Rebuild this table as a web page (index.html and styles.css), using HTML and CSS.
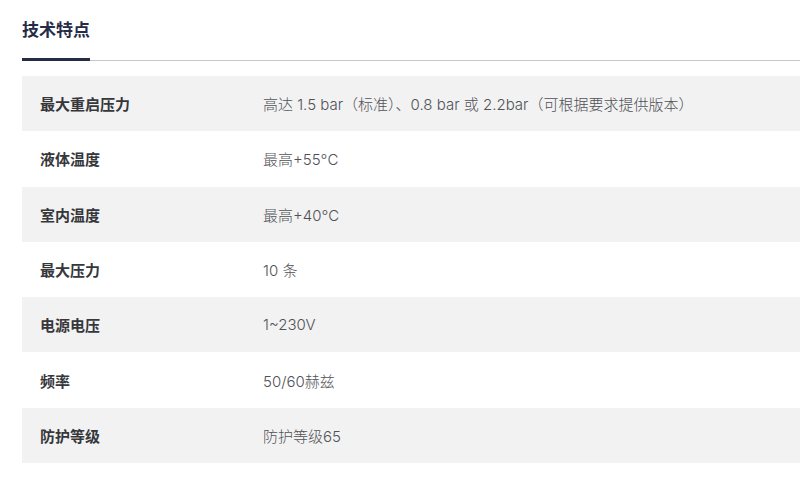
FILE: index.html
```html
<!DOCTYPE html>
<html lang="zh">
<head>
<meta charset="utf-8">
<link rel="stylesheet" href="styles.css">
</head>
<body>
<section class="specs">
  <div class="tabs">
    <h2 class="tab active">技术特点</h2>
  </div>
  <div class="table">
    <div class="row"><div class="label">最大重启压力</div><div class="value">高达 1.5 bar（标准）、0.8 bar 或 2.2bar（可根据要求提供版本）</div></div>
    <div class="row"><div class="label">液体温度</div><div class="value">最高+55°C</div></div>
    <div class="row"><div class="label">室内温度</div><div class="value">最高+40°C</div></div>
    <div class="row"><div class="label">最大压力</div><div class="value">10 条</div></div>
    <div class="row"><div class="label">电源电压</div><div class="value">1~230V</div></div>
    <div class="row"><div class="label">频率</div><div class="value">50/60赫兹</div></div>
    <div class="row"><div class="label">防护等级</div><div class="value">防护等级65</div></div>
  </div>
</section>
</body>
</html>
```
FILE: styles.css
```css
html, body {
  margin: 0;
  padding: 0;
  background: #ffffff;
  overflow: hidden;
}
body {
  font-family: "Inter", "Noto Sans CJK SC", sans-serif;
  width: 800px;
  height: 477px;
}
.specs {
  padding-left: 22px;
}
.tabs {
  display: flex;
  border-bottom: 1px solid #c8c8cc;
  height: 61px;
  box-sizing: border-box;
}
.tab {
  margin: 0 0 -1px 0;
  font-size: 17px;
  font-weight: 700;
  color: #262b48;
  padding-top: 16px;
  width: 68px;
  box-sizing: border-box;
  border-bottom: 3px solid #262b48;
  line-height: 25px;
  font-family: "Noto Sans CJK SC", sans-serif;
}
.table {
  margin-top: 15px;
  display: flex;
  flex-direction: column;
}
.row {
  display: flex;
  align-items: center;
  height: 55.3px;
}
.row:nth-child(odd) {
  background: #f2f2f2;
}
.label {
  width: 223px;
  padding-left: 18px;
  font-size: 15px;
  font-weight: 700;
  color: #36373b;
  font-family: "Noto Sans CJK SC", sans-serif;
}
.value {
  font-size: 15px;
  color: #505156;
  font-weight: 300;
}
```
